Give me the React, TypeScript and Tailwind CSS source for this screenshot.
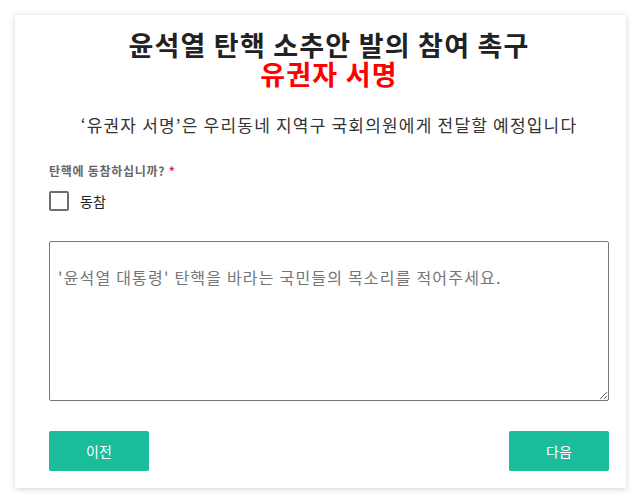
import { useState } from "react";

const FONT = { fontFamily: '"Noto Sans CJK KR", "Noto Sans", sans-serif' };

export default function App() {
  const [checked, setChecked] = useState(false);

  return (
    <div className="min-h-[503px] w-full bg-white pt-[15px] pl-[15px] pr-[15px]" style={FONT}>
      <div className="w-[611px] bg-white pl-[34px] pr-[17px] pt-[15px] pb-[17px] tracking-[0.075em] shadow-[0_1px_6px_rgba(0,0,0,0.18)]">
        {/* Heading */}
        <h1 className="text-center text-[27px] font-bold leading-[29px] text-[#222]">
          <span className="block">윤석열 탄핵 소추안 발의 참여 촉구</span>
          <span className="block text-[#ff0000]">유권자 서명</span>
        </h1>

        <p className="mt-[24px] text-center text-[17px] leading-[26px] text-[#333]">
          ‘유권자 서명’은 우리동네 지역구 국회의원에게 전달할 예정입니다
        </p>

        {/* Question */}
        <div className="mt-[24px] text-[12px] font-bold leading-[18px] tracking-[0.06em] text-[#666]">
          탄핵에 동참하십니까? <span className="text-[#e0245e]">*</span>
        </div>

        <label className="mt-[11px] flex cursor-pointer items-center gap-[11px]">
          <span
            onClick={() => setChecked(!checked)}
            className="flex h-[20px] w-[20px] items-center justify-center rounded-[2px] border-2 border-[#6f6f6f] bg-white"
          >
            {checked && <span className="h-[10px] w-[10px] bg-[#6f6f6f]" />}
          </span>
          <span className="text-[14px] leading-[20px] tracking-normal text-[#222]">동참</span>
        </label>

        {/* Comment box */}
        <textarea
          className="mt-[30px] block h-[160px] w-full rounded-[2px] border border-[#767676] px-[8px] pt-[23px] text-[16px] leading-[24px] tracking-[0.075em] text-[#222] outline-none placeholder:text-[#757575]"
          placeholder="'윤석열 대통령' 탄핵을 바라는 국민들의 목소리를 적어주세요."
        />

        {/* Nav */}
        <div className="mt-[30px] flex items-center justify-between">
          <button className="h-[40px] w-[100px] rounded-[2px] bg-[#1abc9c] text-[14px] tracking-normal text-white">
            이전
          </button>
          <button className="h-[40px] w-[100px] rounded-[2px] bg-[#1abc9c] text-[14px] tracking-normal text-white">
            다음
          </button>
        </div>
      </div>
    </div>
  );
}
